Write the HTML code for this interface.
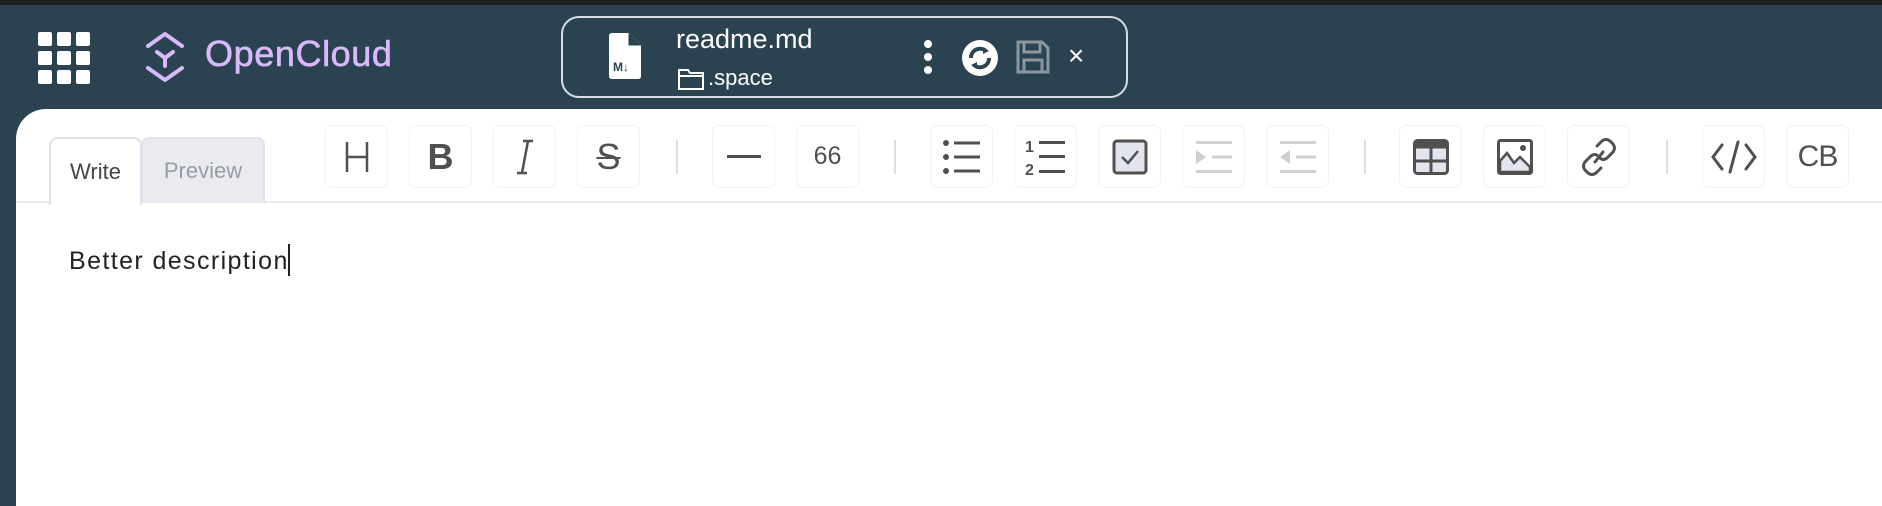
<!DOCTYPE html>
<html><head><meta charset="utf-8"><style>
*{margin:0;padding:0;box-sizing:border-box}
body{width:1882px;height:506px;overflow:hidden;background:#2b4350;font-family:"Liberation Sans",sans-serif;position:relative}
.top{position:absolute;left:0;top:0;width:100%;height:5px;background:#1e1f22}
.abs{position:absolute}
.panel{position:absolute;left:16px;top:109px;right:0;bottom:0;background:#fff;border-top-left-radius:30px}
.tab{position:absolute;top:137px;height:66px;border:2px solid #dfe2e8;border-bottom:none;border-radius:8px 8px 0 0;font-size:22px;display:flex;align-items:center;justify-content:center}
.btn{position:absolute;top:125px;width:63px;height:63px;border:1.5px solid #f1f2f5;border-radius:7px;display:flex;align-items:center;justify-content:center;color:#505050}
.sep{position:absolute;top:140px;width:2px;height:34px;background:#dcdee3}
</style></head><body>
<div class="top"></div>
<svg class="abs" style="left:38px;top:32px" width="52" height="52" viewBox="0 0 52 52" fill="#fff">
<rect x="0" y="0" width="14" height="14" rx="2"/><rect x="19" y="0" width="14" height="14" rx="2"/><rect x="38" y="0" width="14" height="14" rx="2"/>
<rect x="0" y="19" width="14" height="14" rx="2"/><rect x="19" y="19" width="14" height="14" rx="2"/><rect x="38" y="19" width="14" height="14" rx="2"/>
<rect x="0" y="38" width="14" height="14" rx="2"/><rect x="19" y="38" width="14" height="14" rx="2"/><rect x="38" y="38" width="14" height="14" rx="2"/></svg>
<svg class="abs" style="left:144px;top:30px" width="42" height="54" viewBox="0 0 42 54" fill="none" stroke="#d9b8fb" stroke-width="4" stroke-linecap="round" stroke-linejoin="round">
<path d="M4 16 L21 4 L38 16"/><path d="M4 38 L21 50 L38 38"/><path d="M13 22 L21 28 L29 22 M21 28 V36"/></svg>
<div class="abs" style="left:205px;top:33px;font-size:36px;color:#d9b8fb;letter-spacing:0.6px;-webkit-text-stroke:0.6px #d9b8fb">OpenCloud</div>
<div class="abs" style="left:561px;top:16px;width:567px;height:82px;border:2px solid #d8dde3;border-radius:18px"></div>
<svg class="abs" style="left:609px;top:33px" width="32" height="46" viewBox="0 0 32 46"><path d="M0 3 Q0 0 3 0 H20 L32 12 V43 Q32 46 29 46 H3 Q0 46 0 43Z" fill="#fff"/><path d="M20 0 V12 H32" fill="#2b4350" stroke="#2b4350" stroke-width="1"/><text x="4" y="38" font-size="12" font-weight="bold" fill="#2b4350" font-family="Liberation Sans">M↓</text></svg>
<div class="abs" style="left:676px;top:24px;font-size:27px;color:#fff">readme.md</div>
<svg class="abs" style="left:678px;top:68px" width="26" height="22" viewBox="0 0 26 22" fill="none" stroke="#fff" stroke-width="2"><path d="M1 2 H10 L12 5 H25 V21 H1Z M1 8 H25"/></svg>
<div class="abs" style="left:708px;top:65px;font-size:22px;color:#fff">.space</div>
<svg class="abs" style="left:922px;top:39px" width="12" height="36"><circle cx="6" cy="5" r="4" fill="#fff"/><circle cx="6" cy="18" r="4" fill="#fff"/><circle cx="6" cy="31" r="4" fill="#fff"/></svg>
<svg class="abs" style="left:961px;top:39px" width="38" height="38" viewBox="0 0 38 38"><circle cx="19" cy="19" r="18" fill="#fff"/><path d="M10 19 a9 9 0 0 1 15 -7 M28 19 a9 9 0 0 1 -15 7" stroke="#2b4350" stroke-width="4" fill="none"/><path d="M22 8 L28 12 L22 15Z M16 30 L10 26 L16 23Z" fill="#2b4350"/></svg>
<svg class="abs" style="left:1016px;top:40px" width="34" height="34" viewBox="0 0 34 34" fill="none" stroke="#8a979f" stroke-width="3"><path d="M2 2 H26 L32 8 V32 H2Z M8 2 V12 H24 V2 M8 32 V20 H26 V32"/></svg>
<div class="abs" style="left:1068px;top:40px;font-size:28px;color:#fff">×</div>
<div class="panel"></div>
<div style="position:absolute;left:16px;top:201px;right:0;height:2px;background:#e6e8ed"></div>
<div class="tab" style="left:49px;width:93px;background:#fff;color:#444;height:68px">Write</div>
<div class="tab" style="left:141px;width:124px;background:#e9ebf0;color:#999ca4">Preview</div>
<div class="btn" style="left:325px"><svg width="30" height="34" viewBox="0 0 30 34" stroke="#505050" stroke-width="2.5" fill="none"><path d="M5 2 V32 M25 2 V32 M5 17 H25"/></svg></div>
<div class="btn" style="left:409px;font-size:36px;font-weight:bold">B</div>
<div class="btn" style="left:493px"><svg width="24" height="36" viewBox="0 0 24 36" stroke="#505050" stroke-width="2.5" fill="none"><path d="M10 2 H20 M4 34 H14 M15 2 L9 34"/></svg></div>
<div class="btn" style="left:577px;font-size:36px;text-decoration:line-through;text-decoration-thickness:2px">S</div>
<div class="sep" style="left:676px"></div>
<div class="btn" style="left:712px"><div style="width:34px;height:3px;background:#505050"></div></div>
<div class="btn" style="left:796px;font-size:25px">66</div>
<div class="sep" style="left:894px"></div>
<div class="btn" style="left:930px"><svg width="40" height="36" viewBox="0 0 40 36" fill="#505050"><circle cx="4" cy="4" r="3"/><circle cx="4" cy="18" r="3"/><circle cx="4" cy="32" r="3"/><rect x="12" y="2.5" width="26" height="3"/><rect x="12" y="16.5" width="26" height="3"/><rect x="12" y="30.5" width="26" height="3"/></svg></div>
<div class="btn" style="left:1014px"><svg width="42" height="40" viewBox="0 0 42 40" fill="#505050"><text x="0" y="15" font-size="16" font-family="Liberation Sans" font-weight="bold">1</text><text x="0" y="38" font-size="16" font-family="Liberation Sans" font-weight="bold">2</text><rect x="14" y="4" width="26" height="3"/><rect x="14" y="18" width="26" height="3"/><rect x="14" y="33" width="26" height="3"/></svg></div>
<div class="btn" style="left:1098px"><svg width="36" height="36" viewBox="0 0 36 36"><rect x="2" y="2" width="32" height="32" rx="3" fill="#e2e5ee" stroke="#505050" stroke-width="3"/><path d="M10 18 L16 24 L26 12" stroke="#505050" stroke-width="2.5" fill="none"/></svg></div>
<div class="btn" style="left:1182px"><svg width="40" height="34" viewBox="0 0 40 34" fill="#cfcfcf"><rect x="2" y="1" width="36" height="3"/><rect x="2" y="30" width="36" height="3"/><rect x="18" y="15.5" width="20" height="3"/><path d="M2 10 L12 17 L2 24Z"/></svg></div>
<div class="btn" style="left:1266px"><svg width="40" height="34" viewBox="0 0 40 34" fill="#cfcfcf"><rect x="2" y="1" width="36" height="3"/><rect x="2" y="30" width="36" height="3"/><rect x="18" y="15.5" width="20" height="3"/><path d="M12 10 L2 17 L12 24Z"/></svg></div>
<div class="sep" style="left:1364px"></div>
<div class="btn" style="left:1399px"><svg width="36" height="36" viewBox="0 0 36 36"><rect x="1.5" y="1.5" width="33" height="33" rx="3" fill="#e2e5ee" stroke="#505050" stroke-width="3"/><rect x="1.5" y="1.5" width="33" height="8" fill="#505050"/><path d="M18 9 V35 M2 22 H34" stroke="#505050" stroke-width="3"/></svg></div>
<div class="btn" style="left:1483px"><svg width="36" height="36" viewBox="0 0 36 36"><rect x="1.5" y="1.5" width="33" height="33" rx="2" fill="#fff" stroke="#505050" stroke-width="3"/><path d="M3 30 L3 22 L10 14 L17 24 L23 18 L33 28 V33 H3Z" fill="#e2e5ee" stroke="#505050" stroke-width="2.5"/><circle cx="26" cy="9" r="3" fill="#505050"/></svg></div>
<div class="btn" style="left:1567px"><svg width="36" height="38" viewBox="0 0 36 38" stroke="#505050" stroke-width="3" fill="none" stroke-linecap="round"><path d="M16 8 L21 3 Q25 0 29 3 L32 6 Q35 10 32 14 L26 20 Q22 23 19 20"/><path d="M20 30 L15 35 Q11 38 7 35 L4 32 Q1 28 4 24 L10 18 Q14 15 17 18"/><path d="M14 24 L22 14"/></svg></div>
<div class="sep" style="left:1666px"></div>
<div class="btn" style="left:1702px"><svg width="46" height="34" viewBox="0 0 46 34" stroke="#505050" stroke-width="3" fill="none" stroke-linecap="round"><path d="M11 5 L2 17 L11 29 M35 5 L44 17 L35 29 M27 2 L19 32"/></svg></div>
<div class="btn" style="left:1786px;font-size:30px;letter-spacing:-1px">CB</div>
<div class="abs" style="left:69px;top:244px;font-size:25px;color:#222;letter-spacing:1.4px;white-space:nowrap">Better description<span style="display:inline-block;width:2px;height:32px;background:#222;vertical-align:-7px;margin-left:-1px"></span></div>
</body></html>
